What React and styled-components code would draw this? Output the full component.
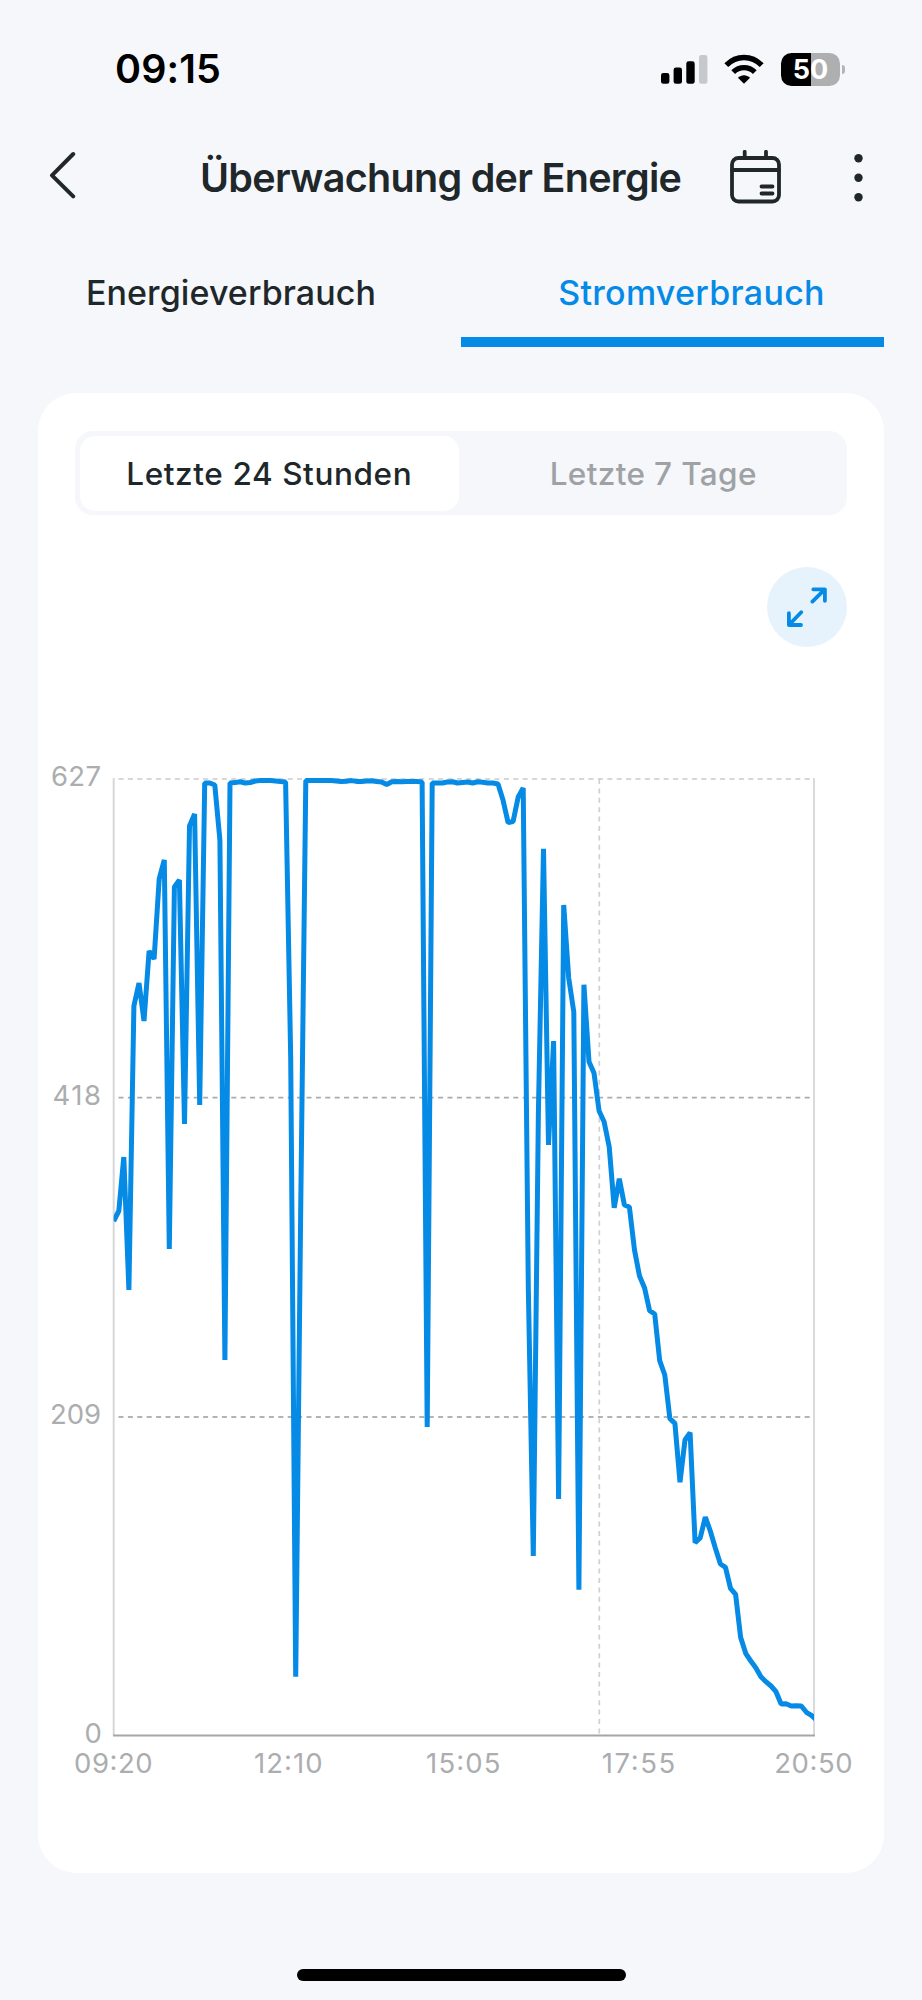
import React, { useState } from 'react';
import styled, { createGlobalStyle } from 'styled-components';

const GlobalStyle = createGlobalStyle`
    * {
        box-sizing: border-box;
    }

    body {
        margin: 0;
        background: #f5f7fb;
        font-family: Inter, 'Liberation Sans', sans-serif;
        color: #20272a;
    }

    button {
        border: none;
        padding: 0;
        background: none;
        font-family: inherit;
        color: inherit;
        cursor: pointer;
    }

    svg {
        display: block;
    }
`;

const tabs = [
    { id: 'energy', label: 'Energieverbrauch', padding: '30px 36px 0 0', spacing: '0.08px' },
    { id: 'power', label: 'Stromverbrauch', padding: '30px 0 0 38px', spacing: '0.28px' },
];

const ranges = [
    { id: 'day', label: 'Letzte 24 Stunden', spacing: '0.6px' },
    { id: 'week', label: 'Letzte 7 Tage', spacing: '0.35px', padding: '0 0 0 5px' },
];

// one sample every 5 minutes, as y inside the chart
const samples = [
    1221, 1211, 1157, 1290, 1006, 983, 1021, 951, 959, 879,
    860, 1249, 887, 880, 1124, 826, 814, 1105, 783, 783,
    785, 840, 1360, 783, 782.6, 781.8, 783, 782.5, 781, 780.5,
    780.5, 780.6, 781, 781.5, 782, 1058, 1676.7, 1201, 780.6, 780.5,
    780.6, 780.5, 780.6, 780.5, 781, 781.6, 781.2, 780.6, 781.4, 781.6,
    781, 780.8, 781.6, 782, 784.5, 781.8, 781.5, 781.7, 781.4, 781.6,
    781.5, 782, 1427, 783, 783, 783, 782, 781.8, 783, 782.4,
    782, 783, 781.8, 782.2, 783, 783, 784, 800, 822.6, 821.5,
    797, 788, 1287, 1556, 1112, 848.7, 1145, 1041, 1499, 905,
    978, 1012, 1589.7, 984.7, 1061.7, 1073, 1111, 1121.7, 1146.7, 1207.7,
    1178.7, 1205, 1207, 1250, 1276, 1288, 1310.7, 1314, 1360.7, 1375,
    1418.7, 1423.3, 1482.3, 1440, 1432.7, 1542.7, 1538, 1517, 1531, 1548.3,
    1564, 1567.3, 1588.3, 1594.3, 1637.3, 1653.3, 1661, 1667.7, 1676.7, 1681.7,
    1686, 1691.7, 1704, 1703.7, 1706, 1705.7, 1706, 1712.3, 1715.3, 1720,
];

const LEFT = 113.7;
const RIGHT = 814;
const STEP = 5.056;

const yTicks = [
    { label: '627', y: 779, width: 50, color: '#c8cacc' },
    { label: '418', y: 1097.7, width: 48.5, color: '#a9abad' },
    { label: '209', y: 1417, width: 51, color: '#989a9c' },
    { label: '0', y: 1735.5, width: 16.5 },
];

const xTicks = [
    { label: '09:20', x: 113.3, width: 78.5 },
    { label: '12:10', x: 288.3, width: 68.5 },
    { label: '15:05', x: 463.3, width: 74.5 },
    { label: '17:55', x: 638.4, width: 73.5 },
    { label: '20:50', x: 813.4, width: 78.5 },
];

const PowerChart = () => {
    const points = samples.map((y, i) => `${(LEFT + i * STEP).toFixed(1)},${y}`).join(' ');

    return (
        <ChartSvg viewBox='38 700 846 1100'>
            <clipPath id='plot'>
                <rect x={LEFT} y='760' width={RIGHT - LEFT} height='990' />
            </clipPath>

            {yTicks.map(({ label, y, color }) => color && (
                <line key={label} x1='118.5' x2={RIGHT} y1={y} y2={y} stroke={color} strokeWidth='1.7' strokeDasharray='5 4.4' />
            ))}
            <line x1='599.3' x2='599.3' y1='779' y2='1735' stroke='#cfd0d3' strokeWidth='1.7' strokeDasharray='5 4.4' />
            <line x1={LEFT} x2={LEFT} y1='778' y2='1735' stroke='#d6d7d8' strokeWidth='2' />
            <line x1={RIGHT} x2={RIGHT} y1='778' y2='1735' stroke='#d9dadb' strokeWidth='2' />
            <line x1='113' x2='815' y1='1735.5' y2='1735.5' stroke='#a5a6a8' strokeWidth='2.2' />

            <polyline points={points} clipPath='url(#plot)' fill='none' stroke='#058ae6' strokeWidth='5' strokeLinejoin='bevel' />

            {yTicks.map(({ label, y, width }) => (
                <AxisText key={label} x={101 - width} y={y + 7} textLength={label === '0' ? undefined : width}>{label}</AxisText>
            ))}
            {xTicks.map(({ label, x, width }) => (
                <AxisText key={label} x={x - width / 2} y='1772.6' textLength={width}>{label}</AxisText>
            ))}
        </ChartSvg>
    );
};

const StatusIcons = () => (
    <IconRow>
        {/* signal */}
        <svg width='28' height='34' viewBox='661 51 28 34' overflow='visible'>
            <rect x='661' y='72' width='8.4' height='10.8' rx='2.4' />
            <rect x='673.6' y='66.5' width='8.4' height='16.3' rx='2.4' />
            <rect x='686.3' y='60.3' width='8.4' height='22.5' rx='2.4' />
            <rect x='699' y='54' width='8.4' height='28.8' rx='2.4' fill='#c7c8cb' />
        </svg>
        {/* wifi */}
        <WifiSvg width='40' height='34' viewBox='724 51 40 34'>
            <path d='M726.3 64.2C736.5 54 751.5 54 761.7 64.2' />
            <path d='M733.2 71.1C739.3 65.1 748.7 65.1 754.8 71.1' />
            <path d='M744 82.8L737.9 76.7C741.3 73.3 746.7 73.3 750.1 76.7Z' className='dot' />
        </WifiSvg>
        {/* battery */}
        <Battery>
            <span>50</span>
        </Battery>
    </IconRow>
);

const App = () => {
    const [tab, setTab] = useState('power');
    const [range, setRange] = useState('day');

    return (
        <Screen>
            <GlobalStyle />
            <StatusBar>
                <Clock>09:15</Clock>
                <StatusIcons />
            </StatusBar>

            <Header>
                <IconButton $lift='6px'>
                    <svg width='27' height='50' viewBox='0 0 27 50' fill='none' stroke='#20272a' strokeWidth='4' strokeLinecap='round' strokeLinejoin='round'>
                        <path d='M24.2 4L3 25.3L24.2 46.4' />
                    </svg>
                </IconButton>
                <Title>Überwachung der Energie</Title>
                <IconButton $lift='2px'>
                    <svg width='52' height='54' viewBox='0 0 52 54' fill='none' stroke='#20272a' strokeWidth='3.8' strokeLinecap='round'>
                        <rect x='2' y='8' width='47' height='43.5' rx='6.5' />
                        <path d='M2 20H49M14.7 1.8V8M36 1.8V8M31.5 36.5H42.5M31.5 43.5H42.5' />
                    </svg>
                </IconButton>
                <IconButton $lift='1px'>
                    <svg width='10' height='50' viewBox='0 0 10 50' fill='#20272a'>
                        <circle cx='5.5' cy='5.3' r='4.2' />
                        <circle cx='5.5' cy='24.8' r='4.2' />
                        <circle cx='5.5' cy='44.3' r='4.2' />
                    </svg>
                </IconButton>
            </Header>

            <Tabs>
                {tabs.map(({ id, label, padding, spacing }) => (
                    <Tab key={id} $active={tab === id} $padding={padding} $spacing={spacing} onClick={() => setTab(id)}>{label}</Tab>
                ))}
            </Tabs>

            <Card>
                <Segments>
                    {ranges.map(({ id, label, spacing, padding }) => (
                        <Segment key={id} $active={range === id} $spacing={spacing} $padding={padding} onClick={() => setRange(id)}>{label}</Segment>
                    ))}
                </Segments>
                <ExpandButton>
                    <svg width='40' height='40' viewBox='0 0 40 40' fill='none' stroke='#058ae6' strokeWidth='3.8' strokeLinecap='round' strokeLinejoin='round'>
                        <path d='M26.3 2.3H37.9V13.8M37 3.2L25.4 14.6M14.2 25.2L2.6 37.2M1.9 26.2V38H14' />
                    </svg>
                </ExpandButton>
                <PowerChart />
            </Card>

            <HomeIndicator />
        </Screen>
    );
};

const Screen = styled.div`
    display: flex;
    flex-direction: column;
    width: 922px;
    height: 2000px;
    overflow: hidden;
    background: #f5f7fb;
`;

// ** status bar start **
const StatusBar = styled.div`
    display: flex;
    justify-content: space-between;
    align-items: center;
    height: 138px;
    padding: 0 77px 0 115px;
`;

const Clock = styled.div`
    font-size: 39.5px;
    font-weight: 600;
    letter-spacing: 0.1px;
    color: #000;
`;

const IconRow = styled.div`
    display: flex;
    align-items: center;
    height: 34px;
`;

const WifiSvg = styled.svg`
    margin: 0 17px 0 35px;
    fill: none;
    stroke: #000;
    stroke-width: 5.4;

    .dot {
        fill: #000;
        stroke: none;
    }
`;

const Battery = styled.div`
    position: relative;
    display: grid;
    place-items: center;
    width: 59px;
    height: 33px;
    margin-right: 5px;
    border-radius: 10.5px;
    background: linear-gradient(90deg, #000 30px, #aeafb1 30px);
    color: #fff;
    font-size: 27px;
    font-weight: 700;
    line-height: 33px;

    &::after {
        content: '';
        position: absolute;
        top: 12px;
        right: -5px;
        width: 3.5px;
        height: 9px;
        border-radius: 0 5px 5px 0;
        background: #b4b5b8;
    }
`;
// ** status bar end **

// ** header start **
const Header = styled.header`
    display: grid;
    grid-template-columns: 151px 530px 123px 10px;
    justify-content: space-between;
    align-items: center;
    height: 80px;
    padding: 0 59px 0 49px;
`;

const IconButton = styled.button`
    display: flex;
    justify-content: flex-start;
    padding-bottom: ${({ $lift }) => $lift};
`;

const Title = styled.h1`
    margin: 0;
    font-size: 39.5px;
    line-height: 80px;
    font-weight: 600;
    letter-spacing: -0.7px;
    white-space: nowrap;
`;
// ** header end **

// ** tabs start **
const Tabs = styled.nav`
    display: grid;
    grid-template-columns: 424px 423px;
    height: 129px;
    margin: 0 38px 0 37px;
`;

const Tab = styled.button`
    padding: ${({ $padding }) => $padding};
    border-bottom: 10px solid ${({ $active }) => ($active ? '#058ae6' : 'transparent')};
    color: ${({ $active }) => ($active ? '#058ae6' : '#20272a')};
    font-size: 34px;
    font-weight: 500;
    letter-spacing: ${({ $spacing }) => $spacing};
    white-space: nowrap;
`;
// ** tabs end **

// ** card start **
const Card = styled.main`
    display: flex;
    flex-direction: column;
    height: 1480px;
    margin: 46px 38px 0;
    padding-top: 38px;
    border-radius: 38px;
    background: #fff;
`;

const Segments = styled.div`
    display: grid;
    grid-template-columns: 379.5px 1fr;
    height: 84px;
    margin: 0 37px;
    padding: 4.5px;
    border-radius: 18px;
    background: #f5f7fb;
`;

const Segment = styled.button`
    padding: ${({ $padding }) => $padding || 0};
    border-radius: 15px;
    background: ${({ $active }) => ($active ? '#fff' : 'transparent')};
    color: ${({ $active }) => ($active ? '#20272a' : '#9fa2a5')};
    font-size: 31.5px;
    font-weight: 500;
    letter-spacing: ${({ $spacing }) => $spacing};
`;

const ExpandButton = styled.button`
    display: grid;
    place-items: center;
    align-self: flex-end;
    width: 80px;
    height: 80px;
    margin: 52px 37px 53px 0;
    border-radius: 50%;
    background: #e6f3fc;
`;

const ChartSvg = styled.svg`
    width: 846px;
    height: 1100px;
`;

const AxisText = styled.text`
    font-size: 27.5px;
    fill: #abadaf;
`;
// ** card end **

const HomeIndicator = styled.div`
    width: 329px;
    height: 12px;
    margin: 96px auto 0;
    border-radius: 6px;
    background: #000;
`;

export default App;
